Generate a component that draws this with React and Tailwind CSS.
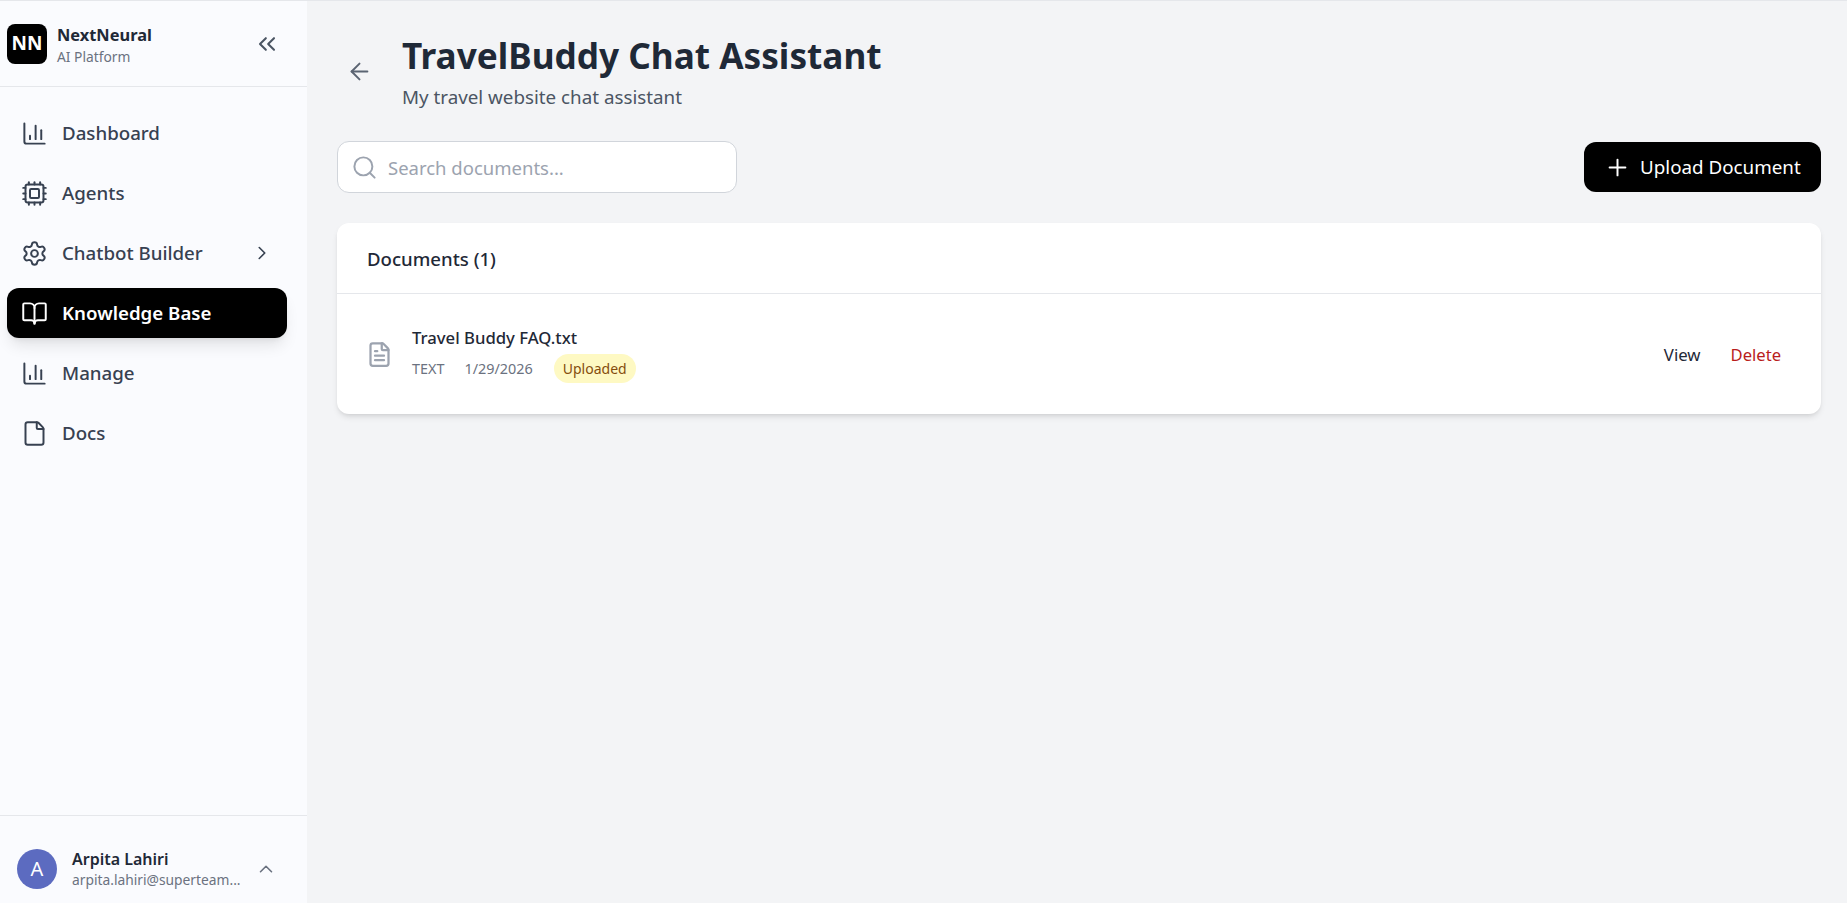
import React from "react";
import { Cpu, Settings, ChevronRight, BookOpen, File, ChevronsLeft, ChevronUp, ArrowLeft, Search, Plus, FileText } from "lucide-react";

const BarsIcon = ({ className }) => (
  <svg className={className} viewBox="0 0 24 24" fill="none" stroke="currentColor" strokeWidth="1.75" strokeLinecap="round" strokeLinejoin="round">
    <path d="M3 3v16a2 2 0 0 0 2 2h16" />
    <path d="M18 17V9" />
    <path d="M13 17V5" />
    <path d="M8 17v-3" />
  </svg>
);

function NavItem({ icon: Icon, label, active, chevron }) {
  return (
    <div className={"flex h-[50px] items-center rounded-xl pl-[14px] pr-[14px] " + (active ? "bg-black text-white font-semibold shadow-lg" : "text-[#374151] font-medium")}>
      <Icon className="h-[27px] w-[27px] shrink-0" strokeWidth={1.75} />
      <span className="ml-[14px] flex-1 text-[18.7px] leading-[28px]">{label}</span>
      {chevron && <ChevronRight className="h-[22px] w-[22px]" strokeWidth={1.75} />}
    </div>
  );
}

export default function App() {
  return (
    <div className="flex h-[903px] w-[1847px] overflow-hidden border-t border-[#e5e7eb] bg-[#f3f4f6] font-['Noto_Sans','Open_Sans',sans-serif]">
      <aside className="flex h-full w-[307px] shrink-0 flex-col bg-[#fafbfe]">
        <div className="flex h-[86px] shrink-0 items-center border-b border-[#e5e7eb] pl-[7px] pr-[26px]">
          <div className="flex h-[40px] w-[40px] items-center justify-center rounded-lg bg-black text-[19px] font-bold text-white">NN</div>
          <div className="ml-[10px] flex-1 pt-[3px]">
            <div className="text-[16.4px] font-bold leading-[22px] text-[#1f2937]">NextNeural</div>
            <div className="pt-[1px] text-[13.8px] leading-[20px] text-[#6b7280]">AI Platform</div>
          </div>
          <ChevronsLeft className="h-[28px] w-[28px] text-[#4b5563]" strokeWidth={1.75} />
        </div>
        <nav className="flex flex-1 flex-col gap-[10px] pl-[7px] pr-[20px] pt-[21px]">
          <NavItem icon={BarsIcon} label="Dashboard" />
          <NavItem icon={Cpu} label="Agents" />
          <NavItem icon={Settings} label="Chatbot Builder" chevron />
          <NavItem icon={BookOpen} label="Knowledge Base" active />
          <NavItem icon={BarsIcon} label="Manage" />
          <NavItem icon={File} label="Docs" />
        </nav>
        <div className="flex h-[88px] shrink-0 items-center border-t border-[#e5e7eb] pl-[17px] pr-[30px] pt-[18px]">
          <div className="flex h-[40px] w-[40px] shrink-0 items-center justify-center rounded-full bg-[#5c6bc0] text-[20px] text-white">A</div>
          <div className="ml-[15px] min-w-0 flex-1">
            <div className="text-[16px] font-semibold leading-[22px] text-[#1f2937]">Arpita Lahiri</div>
            <div className="w-[171px] truncate text-[13.8px] leading-[20px] text-[#6b7280]">arpita.lahiri@superteam...</div>
          </div>
          <ChevronUp className="h-[22px] w-[22px] text-[#6b7280]" strokeWidth={1.75} />
        </div>
      </aside>
      <main className="flex flex-1 flex-col pl-[30px] pr-[26px]">
        <div className="flex h-[110px] items-center pt-[31px]">
          <ArrowLeft className="ml-[9px] mt-[-1px] h-[27px] w-[27px] text-[#5b6472]" strokeWidth={1.75} />
          <div className="ml-[29px]">
            <h1 className="text-[35.2px] font-bold leading-[44px] text-[#1f2937]">TravelBuddy Chat Assistant</h1>
            <p className="mt-[6px] text-[18.8px] leading-[28px] text-[#4b5563]">My travel website chat assistant</p>
          </div>
        </div>
        <div className="mt-[30px] flex items-center justify-between">
          <div className="flex h-[52px] w-[400px] items-center rounded-xl border border-[#d1d5db] bg-white pl-[13px]">
            <Search className="h-[27px] w-[27px] text-[#9ca3af]" strokeWidth={1.75} />
            <span className="ml-[10px] pt-[2px] text-[18.5px] text-[#9ca3af]">Search documents...</span>
          </div>
          <button className="flex h-[50px] w-[237px] items-center rounded-xl bg-black pl-[20px] text-[18.8px] text-white">
            <Plus className="h-[27px] w-[27px]" strokeWidth={1.75} />
            <span className="ml-[9px]">Upload Document</span>
          </button>
        </div>
        <section className="mt-[30px] rounded-xl bg-white shadow-md">
          <div className="flex h-[71px] items-center border-b border-[#e5e7eb] px-[30px]">
            <h2 className="pt-[2px] text-[18.6px] font-medium text-[#1f2937]">Documents (1)</h2>
          </div>
          <div className="flex h-[120px] items-center pl-[29px] pr-[40px]">
            <FileText className="h-[27px] w-[27px] text-[#9ca3af]" strokeWidth={2} />
            <div className="ml-[19px] flex-1 pt-[3px]">
              <div className="mt-[-2px] text-[16.7px] font-medium leading-[24px] text-[#1f2937]">Travel Buddy FAQ.txt</div>
              <div className="mt-[4px] flex items-center text-[14.4px] text-[#6b7280]">
                <span>TEXT</span>
                <span className="ml-[20px]">1/29/2026</span>
                <span className="ml-[21px] rounded-full bg-[#fef9c3] px-[9px] py-[4px] text-[14px] leading-[21px] text-[#854d0e]">Uploaded</span>
              </div>
            </div>
            <span className="pt-[2px] text-[16.8px] text-[#1f2937]">View</span>
            <span className="ml-[30px] pt-[2px] text-[16.6px] text-[#b91c1c]">Delete</span>
          </div>
        </section>
      </main>
    </div>
  );
}
